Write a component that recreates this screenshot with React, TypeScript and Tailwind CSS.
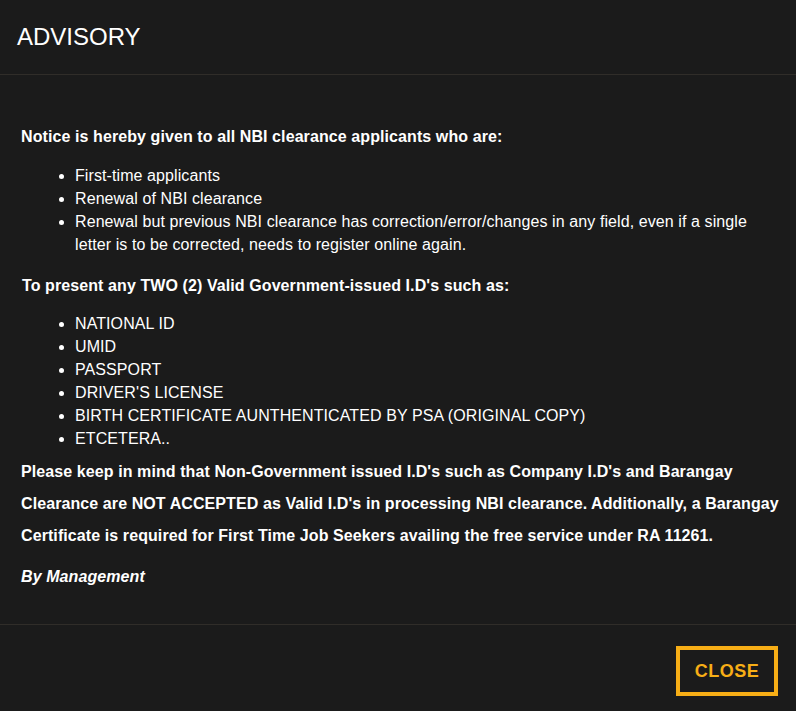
import React from "react";

export default function App() {
  const first = [
    "First-time applicants",
    "Renewal of NBI clearance",
    "Renewal but previous NBI clearance has correction/error/changes in any field, even if a single letter is to be corrected, needs to register online again.",
  ];
  const ids = [
    "NATIONAL ID",
    "UMID",
    "PASSPORT",
    "DRIVER'S LICENSE",
    "BIRTH CERTIFICATE AUNTHENTICATED BY PSA (ORIGINAL COPY)",
    "ETCETERA..",
  ];
  return (
    <div
      className="w-[796px] h-[711px] bg-[#1b1b1b] text-white flex flex-col overflow-hidden"
      style={{ fontFamily: '"Liberation Sans", Arial, sans-serif' }}
    >
      <div className="h-[75px] border-b border-[#302d29] flex items-center px-[17px] shrink-0">
        <h1 className="text-[24px] leading-none font-normal">ADVISORY</h1>
      </div>
      <div className="flex-1 pl-[21px] pr-[12px] pt-[50px] text-[16px] tracking-[0.09px]">
        <p className="font-bold leading-[23px]">
          Notice is hereby given to all NBI clearance applicants who are:
        </p>
        <ul className="list-disc pl-[54px] pr-[30px] mt-[16px] leading-[23px]">
          {first.map((t) => (
            <li key={t}>{t}</li>
          ))}
        </ul>
        <p className="font-bold leading-[23px] mt-[18px] ml-[1px]">
          To present any TWO (2) Valid Government-issued I.D's such as:
        </p>
        <ul className="list-disc pl-[54px] mt-[15px] leading-[23px]">
          {ids.map((t) => (
            <li key={t}>{t}</li>
          ))}
        </ul>
        <p className="font-bold leading-[32px] mt-[6px] whitespace-nowrap">
          Please keep in mind that Non-Government issued I.D's such as Company I.D's and Barangay
          <br />
          Clearance are NOT ACCEPTED as Valid I.D's in processing NBI clearance. Additionally, a Barangay
          <br />
          Certificate is required for First Time Job Seekers availing the free service under RA 11261.
        </p>
        <p className="font-bold italic leading-[23px] mt-[13px]">By Management</p>
      </div>
      <div className="h-[87px] border-t border-[#302d29] flex items-start justify-end pt-[21px] pr-[18px] shrink-0">
        <button className="w-[102px] h-[50px] border-[4px] border-[#f7ae16] text-[#f7ae16] font-bold text-[18px] tracking-[0.5px]">
          CLOSE
        </button>
      </div>
    </div>
  );
}
